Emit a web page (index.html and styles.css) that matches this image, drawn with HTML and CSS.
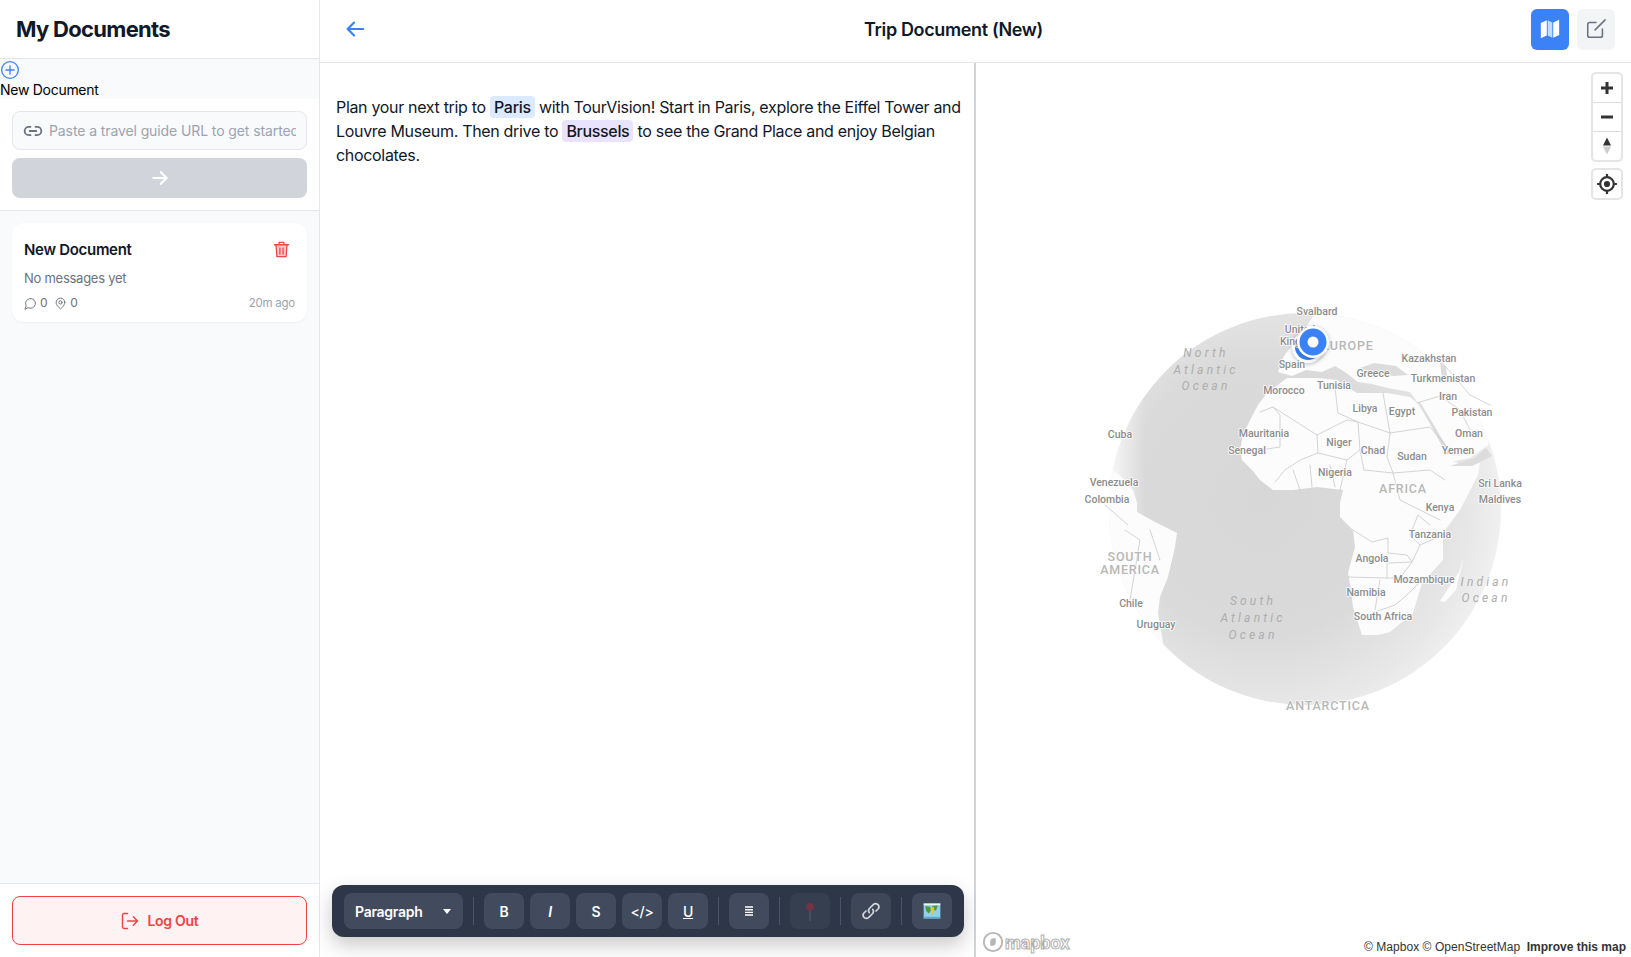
FILE: index.html
```html
<!DOCTYPE html>
<html lang="en">
<head>
  <meta charset="UTF-8" />
  <meta name="viewport" content="width=device-width, initial-scale=1.0" />
  <title>Trip Document (New)</title>
  <link rel="stylesheet" href="styles.css">
</head>
<body>
  <aside class="sidebar">
    <div class="sidebar-head"><h1>My Documents</h1></div>

    <div class="new-doc">
      <svg class="new-doc-icon" viewBox="0 0 24 24"><circle cx="12" cy="12" r="10"/><path d="M12 7v10M7 12h10"/></svg>
      <div class="new-doc-text">New Document</div>
    </div>

    <div class="url-box">
      <div class="url-input">
        <svg viewBox="0 0 24 24"><path d="M9 17H7A5 5 0 0 1 7 7h2M15 7h2a5 5 0 0 1 0 10h-2M8 12h8"/></svg>
        <span class="url-placeholder">Paste a travel guide URL to get started</span>
      </div>
      <button class="url-go">
        <svg viewBox="0 0 24 24"><path d="M4 12h16M13 5l7 7-7 7"/></svg>
      </button>
    </div>

    <div class="doc-list">
      <div class="doc-card">
        <div class="doc-top">
          <span class="doc-title">New Document</span>
          <svg class="doc-trash" viewBox="0 0 24 24"><path class="trash-body" d="M5 6h14l-1.2 15H6.2z"/><path d="M3 6h18M9 6V3h6v3M5 6l1.2 15h11.6L19 6M10 10v8M14 10v8"/></svg>
        </div>
        <div class="doc-sub">No messages yet</div>
        <div class="doc-meta">
          <span class="doc-stat">
            <svg viewBox="0 0 24 24"><path d="M7.9 20A9 9 0 1 0 4 16.1L2 22z"/></svg>0
          </span>
          <span class="doc-stat">
            <svg viewBox="0 0 24 24"><path d="M20 10c0 6-8 12-8 12s-8-6-8-12a8 8 0 0 1 16 0z"/><circle cx="12" cy="10" r="3"/></svg>0
          </span>
          <span class="doc-time">20m ago</span>
        </div>
      </div>
    </div>

    <div class="sidebar-foot">
      <button class="logout">
        <svg viewBox="0 0 24 24"><path d="M9 21H5a2 2 0 0 1-2-2V5a2 2 0 0 1 2-2h4M9 12h12M16 7l5 5-5 5"/></svg>
        Log Out
      </button>
    </div>
  </aside>

  <main class="main">
    <header class="topbar">
      <svg class="back" viewBox="0 0 24 24"><path d="M21 12H4M11 5l-7 7 7 7"/></svg>
      <h2>Trip Document (New)</h2>
      <div class="view-btns">
        <button class="view-btn view-on">
          <svg viewBox="0 0 24 24"><path class="map-side" d="M2 5.5L8.5 2.5V19L2 22zM15.5 5L22 2v16.5L15.5 21.5z"/><path class="map-mid" d="M9.5 2.5l5 2.5v16.5l-5-2.5z"/></svg>
        </button>
        <button class="view-btn">
          <svg viewBox="0 0 24 24"><path d="M12 5H5a2 2 0 0 0-2 2v12a2 2 0 0 0 2 2h12a2 2 0 0 0 2-2v-7M11 13L22 2"/></svg>
        </button>
      </div>
    </header>

    <div class="panes">
      <section class="editor">
        <p>Plan your next trip to <span class="chip chip-blue">Paris</span> with TourVision! Start in Paris, explore the Eiffel Tower and Louvre Museum. Then drive to <span class="chip chip-purple">Brussels</span> to see the Grand Place and enjoy Belgian chocolates.</p>

        <div class="toolbar">
          <button class="tool tool-select">Paragraph <span class="caret"></span></button>
          <span class="tool-sep"></span>
          <button class="tool tool-b">B</button>
          <button class="tool tool-i">I</button>
          <button class="tool tool-s">S</button>
          <button class="tool tool-code">&lt;/&gt;</button>
          <button class="tool tool-u">U</button>
          <span class="tool-sep"></span>
          <button class="tool">
            <svg class="tool-align" viewBox="0 0 16 16"><path d="M4 4h8M4 6.7h8M4 9.4h8M4 12h8"/></svg>
          </button>
          <span class="tool-sep"></span>
          <button class="tool tool-off">
            <svg viewBox="0 0 24 24"><path d="M12 10v14" stroke="#9ca3af" stroke-width="1.2"/><circle cx="12" cy="7" r="4.6" fill="#e02f3e" stroke="none"/></svg>
          </button>
          <span class="tool-sep"></span>
          <button class="tool tool-dim">
            <svg viewBox="0 0 24 24" fill="none" stroke="#d1d5db" stroke-width="1.6" stroke-linecap="round"><path d="M10 14a4 4 0 0 1 0-5l5-5a4 4 0 0 1 6 5l-3 3"/><path d="M14 10a4 4 0 0 1 0 5l-5 5a4 4 0 0 1-6-5l3-3"/></svg>
          </button>
          <span class="tool-sep"></span>
          <button class="tool">
            <svg class="tool-map" viewBox="0 0 24 24"><rect x="2" y="3" width="20" height="18" fill="#8fd0ea"/><path d="M4 6l6 1 1 4-3 4-3-3zM12 6l7-1-2 6-3 1z" fill="#4f9a3a"/><path d="M10 8l4-1 1 5-3 5-1-4z" fill="#e8c33a"/><rect x="2" y="3" width="20" height="2" fill="#eaf6fb"/><rect x="2" y="19" width="20" height="2" fill="#5aa9cc"/></svg>
          </button>
        </div>
      </section>

      <section class="map">
        <svg class="globe" viewBox="976 63 655 894">
          <defs>
            <radialGradient id="sea" gradientUnits="userSpaceOnUse" cx="1262" cy="500" r="250">
              <stop offset="0" stop-color="#d7d7d7"/>
              <stop offset="0.55" stop-color="#dadada"/>
              <stop offset="0.85" stop-color="#e8e8e8"/>
              <stop offset="1" stop-color="#f3f3f3"/>
            </radialGradient>
            <linearGradient id="fade" x1="0" x2="1" y1="0" y2="0">
              <stop offset="0" stop-color="#fff"/>
              <stop offset="1" stop-color="#fff" stop-opacity="0"/>
            </linearGradient>
            <clipPath id="disc"><circle cx="1305" cy="509" r="196"/></clipPath>
          </defs>

          <circle cx="1305" cy="509" r="196" fill="url(#sea)"/>
          <rect x="1100" y="400" width="45" height="260" fill="url(#fade)" clip-path="url(#disc)"/>

          <g class="land" clip-path="url(#disc)">
            <!-- africa -->
            <path d="M1287 378L1267 393 1258 405 1250 420 1243 435 1240 450 1242 460 1252 470 1260 480 1273 490 1293 490 1317 487 1343 490 1340 503 1340 517 1353 530 1355 547 1348 573 1351 590 1353 607 1362 635 1378 635 1390 632 1413 613 1422 583 1443 560 1443 533 1460 510 1478 475 1480 463 1464 465 1450 460 1447 447 1417 403 1410 397 1387 393 1357 393 1337 380 1317 378z"/>
            <path d="M1464 557L1459 572 1442 598 1440 601 1445 602 1456 590z"/>
            <!-- europe and asia -->
            <path d="M1284 356L1278 372 1292 376 1306 370 1322 372 1335 366 1345 372 1358 382 1372 384 1388 388 1410 392 1418 403 1447 447 1450 462 1470 458 1488 445 1500 420 1520 400 1540 380 1540 290 1320 300 1312 318 1304 330 1296 340z"/>
            <!-- americas -->
            <path d="M1100 470L1113 470 1125 480 1133 490 1137 503 1137 512 1155 522 1177 533 1175 547 1168 577 1160 597 1158 613 1163 643 1170 660 1090 660 1090 470z"/>
            <path d="M1113 432l14 3-5 1z"/>
          </g>

          <g class="sea-patch">
            <path d="M1360 368l14-5 22 3 12 9-14 1-18-2z"/>
            <path d="M1440 362l6 5 2 15-6-3z"/>
            <path d="M1418 402l2 0 30 50-3 3z"/>
            <path d="M1450 466l24-8 12-10 6 8-20 10z"/>
          </g>

          <g class="borders">
            <path d="M1273 407L1317 435 1347 420 1358 422 1390 433"/>
            <path d="M1260 412L1273 407 1280 415 1280 447 1260 450"/>
            <path d="M1335 388L1338 413 1358 422 1360 450 1364 470"/>
            <path d="M1317 435L1318 453 1300 460 1285 470 1275 482"/>
            <path d="M1318 453L1347 460 1360 450"/>
            <path d="M1383 393L1390 433 1387 457 1393 473 1430 470 1445 480"/>
            <path d="M1390 433L1430 427 1447 447"/>
            <path d="M1347 460L1340 490"/>
            <path d="M1364 470L1393 473 1400 500 1420 510 1440 520"/>
            <path d="M1353 530L1372 542 1388 538 1388 553 1407 555 1412 562 1387 563 1387 578 1348 577"/>
            <path d="M1380 580L1375 610M1387 578L1400 578 1412 562 1420 545 1443 535"/>
            <path d="M1407 595L1420 582 1400 578M1375 612L1395 605 1407 595"/>
            <path d="M1420 545L1410 535 1418 515 1430 525"/>
            <path d="M1293 470L1300 490M1310 465L1312 487M1330 465L1335 487"/>
            <path d="M1417 403L1440 396 1460 410 1470 430M1440 360L1470 395 1490 405"/>
            <path d="M1125 530L1140 540 1130 600M1105 505L1128 525M1150 530L1160 560"/>
          </g>

          <g class="markers">
            <circle class="halo" cx="1308" cy="347" r="16"/>
            <circle class="dot" cx="1308" cy="347" r="13"/>
          </g>

          <g class="labels">
            <text x="1317" y="315">Svalbard</text>
            <text x="1300" y="333">United</text>
            <text x="1301" y="345">Kingdom</text>
            <text x="1292" y="368">Spain</text>
            <text x="1373" y="377">Greece</text>
            <text x="1429" y="362">Kazakhstan</text>
            <text x="1443" y="382">Turkmenistan</text>
            <text x="1448" y="400">Iran</text>
            <text x="1472" y="416">Pakistan</text>
            <text x="1469" y="437">Oman</text>
            <text x="1458" y="454">Yemen</text>
            <text x="1500" y="487">Sri Lanka</text>
            <text x="1500" y="503">Maldives</text>
            <text x="1334" y="389">Tunisia</text>
            <text x="1365" y="412">Libya</text>
            <text x="1402" y="415">Egypt</text>
            <text x="1339" y="446">Niger</text>
            <text x="1373" y="454">Chad</text>
            <text x="1412" y="460">Sudan</text>
            <text x="1335" y="476">Nigeria</text>
            <text x="1440" y="511">Kenya</text>
            <text x="1430" y="538">Tanzania</text>
            <text x="1372" y="562">Angola</text>
            <text x="1424" y="583">Mozambique</text>
            <text x="1366" y="596">Namibia</text>
            <text x="1383" y="620">South Africa</text>
            <text x="1131" y="607">Chile</text>
            <text x="1156" y="628">Uruguay</text>
            <text x="1107" y="503">Colombia</text>
            <text x="1114" y="486">Venezuela</text>
            <text x="1120" y="438">Cuba</text>
            <text x="1264" y="437">Mauritania</text>
            <text x="1247" y="454">Senegal</text>
            <text x="1284" y="394">Morocco</text>
          </g>

          <g class="continents">
            <text x="1403" y="493">AFRICA</text>
            <text x="1130" y="561">SOUTH</text>
            <text x="1130" y="574">AMERICA</text>
            <text x="1328" y="710">ANTARCTICA</text>
          </g>

          <g class="oceans">
            <text x="1206" y="357">North</text>
            <text x="1206" y="374">Atlantic</text>
            <text x="1206" y="390">Ocean</text>
            <text x="1253" y="605">South</text>
            <text x="1253" y="622">Atlantic</text>
            <text x="1253" y="639">Ocean</text>
            <text x="1486" y="586">Indian</text>
            <text x="1486" y="602">Ocean</text>
          </g>

          <text class="europe" x="1322" y="350">EUROPE</text>

          <g class="markers">
            <circle class="halo" cx="1313" cy="342" r="16"/>
            <circle class="dot" cx="1313" cy="342" r="13.5"/>
            <circle class="dot-hole" cx="1313" cy="342" r="5.5"/>
          </g>
        </svg>

        <div class="map-controls">
          <div class="ctrl-group">
            <button class="ctrl"><svg viewBox="0 0 20 20"><path d="M10 4v12M4 10h12"/></svg></button>
            <button class="ctrl"><svg viewBox="0 0 20 20"><path d="M4 10h12"/></svg></button>
            <button class="ctrl"><svg viewBox="0 0 20 20"><path class="needle-up" d="M10 1.5l4 8h-8z"/><path class="needle-down" d="M10 18.5l4-8h-8z"/></svg></button>
          </div>
          <div class="ctrl-group">
            <button class="ctrl"><svg class="locate" viewBox="0 0 20 20"><circle cx="10" cy="10" r="6.2"/><circle class="locate-dot" cx="10" cy="10" r="2.8"/><path d="M10 1v3.5M10 15.5V19M1 10h3.5M15.5 10H19"/></svg></button>
          </div>
        </div>

        <div class="mapbox-logo">
          <svg viewBox="0 0 24 24"><circle cx="12" cy="12" r="10"/><path class="logo-mark" d="M9 16v-5a4 4 0 0 1 4-3h2v4a4 4 0 0 1-3 4z"/></svg>
          <span>mapbox</span>
        </div>
        <div class="attrib">© Mapbox © OpenStreetMap <strong>Improve this map</strong></div>
      </section>
    </div>
  </main>
</body>
</html>
```

FILE: styles.css
```css
* {
  box-sizing: border-box;
  letter-spacing: -0.02em;
}
html, body {
  height: 100%;
}
body {
  margin: 0;
  display: flex;
  height: 957px;
  overflow: hidden;
  font-family: Inter, "Noto Sans", sans-serif;
  color: #111827;
  background: #fff;
}
button {
  font-family: inherit;
  border: none;
  padding: 0;
}
svg {
  fill: none;
  stroke: currentColor;
  stroke-width: 2;
  stroke-linecap: round;
  stroke-linejoin: round;
}

/* sidebar */
.sidebar {
  width: 320px;
  flex: none;
  display: flex;
  flex-direction: column;
  border-right: 1px solid #e5e7eb;
  background: #f9fafb;
}
.sidebar-head {
  height: 59px;
  padding: 0 16px;
  display: flex;
  align-items: center;
  background: #fff;
  border-bottom: 1px solid #e5e7eb;
}
.sidebar-head h1 {
  margin: 0;
  font-size: 22px;
  font-weight: 700;
  letter-spacing: -0.7px;
}
.new-doc {
  height: 40px;
  padding-top: 1px;
  font-size: 14px;
  line-height: 20px;
  color: #000;
}
.new-doc-icon {
  display: block;
  width: 20px;
  height: 20px;
  color: #3b82f6;
  stroke-width: 1.6;
}
.new-doc-text {
  margin-top: 0;
}
.url-box {
  padding: 12px;
  background: #fff;
  border-bottom: 1px solid #e5e7eb;
  display: flex;
  flex-direction: column;
  gap: 8px;
}
.url-input {
  height: 39px;
  padding: 0 10px;
  display: flex;
  align-items: center;
  gap: 6px;
  background: #f9fafb;
  border: 1px solid #e5e7eb;
  border-radius: 8px;
  overflow: hidden;
}
.url-input svg {
  width: 20px;
  height: 20px;
  flex: none;
  color: #6b7280;
  stroke-width: 2.2;
}
.url-placeholder {
  font-size: 14px;
  letter-spacing: -0.1px;
  color: #9ca3af;
  white-space: nowrap;
  overflow: hidden;
}
.url-go {
  height: 40px;
  background: #d1d5db;
  border-radius: 8px;
  color: #fff;
  display: flex;
  align-items: center;
  justify-content: center;
}
.url-go svg {
  width: 20px;
  height: 20px;
  stroke-width: 2.6;
}
.doc-list {
  flex: 1;
  padding: 12px;
}
.doc-card {
  height: 99px;
  padding: 13px 12px 0;
  background: #fff;
  border-radius: 12px;
  box-shadow: 0 1px 2px rgba(0, 0, 0, 0.05);
}
.doc-top {
  height: 26px;
  display: flex;
  align-items: center;
  justify-content: space-between;
  padding-right: 4px;
}
.doc-title {
  font-size: 15px;
  font-weight: 600;
}
.doc-trash {
  width: 19px;
  height: 19px;
  color: #ef4444;
  stroke-width: 1.6;
}
.trash-body {
  fill: #fecaca;
  stroke: none;
}
.doc-sub {
  margin-top: 6px;
  font-size: 13px;
  line-height: 20px;
  color: #6b7280;
}
.doc-meta {
  margin-top: 7px;
  display: flex;
  align-items: center;
  gap: 7px;
  font-size: 12px;
  line-height: 16px;
  color: #6b7280;
}
.doc-stat {
  display: flex;
  align-items: center;
  gap: 3px;
}
.doc-stat svg {
  width: 13px;
  height: 13px;
  stroke-width: 1.8;
}
.doc-time {
  margin-left: auto;
  font-size: 11.5px;
  color: #9ca3af;
}
.sidebar-foot {
  height: 74px;
  padding: 12px;
  background: #fff;
  border-top: 1px solid #e5e7eb;
}
.logout {
  width: 100%;
  height: 49px;
  display: flex;
  align-items: center;
  justify-content: center;
  gap: 7px;
  font-size: 14px;
  font-weight: 600;
  color: #ef4444;
  background: #fef2f2;
  border: 1px solid #ef4444;
  border-radius: 8px;
}
.logout svg {
  width: 20px;
  height: 20px;
  stroke-width: 1.7;
}

/* main area */
.main {
  flex: 1;
  min-width: 0;
  display: flex;
  flex-direction: column;
}
.topbar {
  height: 63px;
  flex: none;
  padding: 0 16px 4px 24px;
  display: flex;
  align-items: center;
  border-bottom: 1px solid #e5e7eb;
}
.back {
  width: 22px;
  height: 24px;
  color: #3b82f6;
  stroke-width: 2.4;
}
.topbar h2 {
  margin: 0;
  flex: 1;
  text-align: center;
  font-size: 18px;
  font-weight: 600;
  padding-left: 10px;
}
.view-btns {
  display: flex;
  gap: 8px;
}
.view-btn {
  width: 38px;
  height: 41px;
  border-radius: 6px;
  background: #f3f4f6;
  color: #6b7280;
  display: flex;
  align-items: center;
  justify-content: center;
}
.view-btn svg {
  width: 22px;
  height: 22px;
  stroke-width: 1.7;
}
.view-on {
  background: #3b82f6;
}
.map-side {
  fill: #fff;
  stroke: none;
}
.map-mid {
  fill: #bfdbfe;
  stroke: none;
}
.panes {
  flex: 1;
  min-height: 0;
  display: flex;
}
.editor {
  width: 656px;
  flex: none;
  position: relative;
  padding: 32px 8px 0 16px;
  border-right: 2px solid #d1d5db;
}
.editor p {
  margin: 0;
  font-size: 16px;
  line-height: 24px;
  color: #111827;
}
.chip {
  padding: 1px 4px;
  border-radius: 4px;
  font-weight: 500;
}
.chip-blue {
  background: #dbeafe;
}
.chip-purple {
  background: #e9e3fd;
}

/* floating toolbar */
.toolbar {
  position: absolute;
  left: 12px;
  bottom: 20px;
  width: 632px;
  height: 52px;
  padding: 8px 12px;
  display: flex;
  align-items: center;
  gap: 6px;
  background: #2d3748;
  border-radius: 12px;
  box-shadow: 0 8px 20px rgba(0, 0, 0, 0.22);
}
.tool {
  width: 40px;
  height: 36px;
  flex: none;
  display: flex;
  align-items: center;
  justify-content: center;
  background: #414b5d;
  color: #fff;
  border-radius: 8px;
  font-size: 14px;
  font-weight: 600;
}
.tool svg {
  width: 20px;
  height: 20px;
}
.tool-select {
  width: 119px;
  justify-content: space-between;
  padding: 0 12px 0 11px;
}
.caret {
  width: 0;
  height: 0;
  border-left: 4.5px solid transparent;
  border-right: 4.5px solid transparent;
  border-top: 5px solid #fff;
}
.tool-sep {
  width: 1px;
  height: 28px;
  flex: none;
  margin: 0 4px;
  background: #4a5568;
}
.tool-i {
  font-style: italic;
}
.tool-u {
  text-decoration: underline;
  font-weight: 500;
}
.tool-code {
  font-weight: 500;
}
.tool .tool-align {
  width: 16px;
  height: 16px;
  stroke-width: 1.4;
  stroke-linecap: butt;
}
.tool-off {
  opacity: 0.4;
}
.tool-dim {
  opacity: 0.8;
}
.tool-map {
  stroke: none;
}

/* map */
.map {
  flex: 1;
  position: relative;
  overflow: hidden;
  background: #fff;
}
.globe {
  position: absolute;
  left: 0;
  top: 0;
  width: 655px;
  height: 894px;
  stroke: none;
  stroke-width: 0;
}
.land {
  fill: #fcfcfc;
}
.sea-patch {
  fill: #dcdcdc;
}
.borders {
  fill: none;
  stroke: #c9c9c9;
  stroke-width: 0.8;
}
.labels text {
  font-family: Roboto, sans-serif;
  font-size: 10.5px;
  font-weight: 500;
  letter-spacing: 0;
  fill: #8c8c8c;
  text-anchor: middle;
  stroke: #fff;
  stroke-width: 1.6px;
  paint-order: stroke;
}
.continents text, .europe {
  font-family: Roboto, sans-serif;
  font-size: 12.5px;
  font-weight: 500;
  letter-spacing: 0.8px;
  fill: #b7b7b7;
  text-anchor: middle;
  stroke: #fff;
  stroke-width: 1.2px;
  paint-order: stroke;
}
.europe {
  text-anchor: start;
}
.oceans text {
  font-family: Roboto, sans-serif;
  font-size: 12px;
  font-style: italic;
  letter-spacing: 3.2px;
  fill: #adadad;
  text-anchor: middle;
}
.halo {
  fill: #fff;
  filter: drop-shadow(0 1px 2px rgba(0, 0, 0, 0.25));
}
.dot {
  fill: #3b82f6;
}
.dot-hole {
  fill: #fff;
}
.map-controls {
  position: absolute;
  top: 9px;
  right: 8px;
  display: flex;
  flex-direction: column;
  gap: 6px;
}
.ctrl-group {
  width: 32px;
  background: #fff;
  border: 2px solid #e5e5e5;
  border-radius: 5px;
  display: flex;
  flex-direction: column;
}
.ctrl {
  width: 28px;
  height: 29px;
  display: flex;
  align-items: center;
  justify-content: center;
  background: transparent;
  color: #333;
  border-bottom: 1px solid #ddd;
}
.ctrl:last-child {
  border-bottom: none;
  height: 28px;
}
.ctrl svg {
  width: 20px;
  height: 20px;
  stroke-width: 3;
  stroke-linecap: butt;
}
.needle-up {
  fill: #333;
  stroke: none;
}
.needle-down {
  fill: #ccc;
  stroke: none;
}
.ctrl .locate {
  width: 22px;
  height: 22px;
  stroke-width: 2;
}
.locate-dot {
  fill: #333;
  stroke: none;
}
.mapbox-logo {
  position: absolute;
  left: 6px;
  bottom: 4px;
  display: flex;
  align-items: center;
  gap: 1px;
  color: #b5b5b5;
}
.mapbox-logo svg {
  width: 22px;
  height: 22px;
  fill: #fff;
  stroke-width: 2;
}
.logo-mark {
  fill: #b5b5b5;
  stroke: none;
}
.mapbox-logo span {
  font-family: Roboto, sans-serif;
  font-size: 18px;
  font-weight: 700;
  letter-spacing: 0;
  color: #fff;
  -webkit-text-stroke: 1px #b0b0b0;
}
.attrib {
  position: absolute;
  right: 5px;
  bottom: 2px;
  font-family: "Liberation Sans", Arial, sans-serif;
  font-size: 12px;
  line-height: 16px;
  letter-spacing: 0.05px;
  color: #333;
}
.attrib strong {
  margin-left: 3px;
  letter-spacing: 0;
}
```
